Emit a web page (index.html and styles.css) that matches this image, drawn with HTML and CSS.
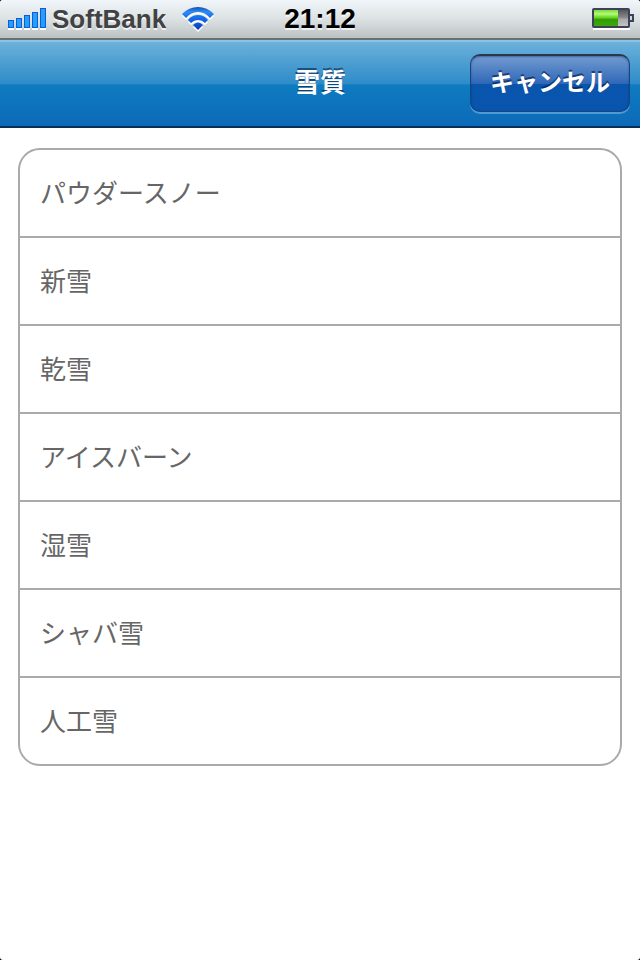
FILE: index.html
```html
<!DOCTYPE html>
<html lang="ja">
<head>
    <meta charset="UTF-8">
    <meta name="viewport" content="width=device-width, initial-scale=1.0">
    <title>雪質</title>
    <link rel="stylesheet" href="styles.css">
</head>

<body>

<div class="status-bar">
  <div class="carrier">
    <svg class="signal" width="40" height="22" viewBox="0 0 40 22">
      <defs>
        <linearGradient id="bar" x1="0" y1="0" x2="0" y2="1">
          <stop offset="0" stop-color="#2f9cf8"/>
          <stop offset="1" stop-color="#14a4ff"/>
        </linearGradient>
      </defs>
      <path d="M0 21h6M8 21h6M16 21h6M24 21h6M32 21h6" stroke="#fff" stroke-width="2"/>
      <g fill="url(#bar)" stroke="#0f5cd8">
        <rect x="0.5" y="12.5" width="5" height="7"/>
        <rect x="8.5" y="10.5" width="5" height="9"/>
        <rect x="16.5" y="7.5" width="5" height="12"/>
        <rect x="24.5" y="4.5" width="5" height="15"/>
        <rect x="32.5" y="0.5" width="5" height="19"/>
      </g>
    </svg>
    <span class="carrier-name">SoftBank</span>
    <svg class="wifi" width="32" height="24" viewBox="0 0 32 24">
      <defs>
        <linearGradient id="wave" x1="0" y1="0" x2="0" y2="24" gradientUnits="userSpaceOnUse">
          <stop offset="0" stop-color="#1450a8"/>
          <stop offset="0.2" stop-color="#2f8cf5"/>
          <stop offset="0.5" stop-color="#1268e8"/>
          <stop offset="1" stop-color="#0838b8"/>
        </linearGradient>
      </defs>
      <g fill="#fff" transform="translate(0 2)">
        <path d="M0 7Q7 0 16 0T32 7L28 11Q23 5 16 5T4 11Z"/>
        <path d="M6 13Q10 8 16 8T26 13L23 16Q20 13 16 13T9 16Z"/>
        <path d="M11 18Q16 13 21 18L16 23Z"/>
      </g>
      <g fill="url(#wave)">
        <path d="M0 7Q7 0 16 0T32 7L28 11Q23 5 16 5T4 11Z"/>
        <path d="M6 13Q10 8 16 8T26 13L23 16Q20 13 16 13T9 16Z"/>
        <path d="M11 18Q16 13 21 18L16 23Z"/>
      </g>
    </svg>
  </div>
  <div class="clock">21:12</div>
  <svg class="battery" width="43" height="22" viewBox="0 0 43 22">
    <defs>
      <linearGradient id="charge" x1="0" y1="0" x2="0" y2="1">
        <stop offset="0" stop-color="#78dc3c"/>
        <stop offset="0.25" stop-color="#b4fa78"/>
        <stop offset="0.5" stop-color="#5cd014"/>
        <stop offset="0.6" stop-color="#329c08"/>
        <stop offset="1" stop-color="#3ca80c"/>
      </linearGradient>
      <linearGradient id="empty" x1="0" y1="0" x2="0" y2="1">
        <stop offset="0" stop-color="#505050"/>
        <stop offset="0.5" stop-color="#8c8c8c"/>
        <stop offset="0.55" stop-color="#a8a8a8"/>
        <stop offset="1" stop-color="#c8c8c8"/>
      </linearGradient>
    </defs>
    <path d="M1 21h37" stroke="#fff" stroke-width="2"/>
    <rect x="1" y="1" width="36" height="18" rx="1" fill="url(#empty)" stroke="#3b4259" stroke-width="2"/>
    <rect x="2" y="2" width="24" height="16" fill="url(#charge)"/>
    <path d="M38 7h3v6h-3" fill="#d0d4d8" stroke="#3b4259" stroke-width="2"/>
  </svg>
</div>

<header class="nav-bar">
  <h1>雪質</h1>
  <button type="button" class="cancel">キャンセル</button>
</header>

<main>
  <ul class="snow-list">
    <li><a href="#powder">パウダースノー</a></li>
    <li><a href="#new">新雪</a></li>
    <li><a href="#dry">乾雪</a></li>
    <li><a href="#ice">アイスバーン</a></li>
    <li><a href="#wet">湿雪</a></li>
    <li><a href="#slush">シャバ雪</a></li>
    <li><a href="#artificial">人工雪</a></li>
  </ul>
</main>

</body>
</html>
```
FILE: styles.css
```css
* {
    box-sizing: border-box;
}

html {
    background: #000;
}

body {
    margin: 0;
    min-height: 100vh;
    background: #fff;
    border-radius: 3px;
    overflow: hidden;
    font-family: "Liberation Sans", "Noto Sans CJK JP", sans-serif;
}

.status-bar {
    display: grid;
    grid-template-columns: 1fr auto 1fr;
    align-items: center;
    height: 40px;
    padding: 0 5px;
    background: linear-gradient(#f0f6f9, #dce1e4 50%, #bcc1c4);
    border-bottom: 2px solid #6a6f72;
    font-size: 26px;
    font-weight: bold;
    line-height: 38px;
    text-shadow: 0 2px 0 rgba(255, 255, 255, 0.7);
}

.carrier {
    display: flex;
    align-items: center;
    gap: 4px;
    padding-left: 3px;
    color: #424242;
}

.wifi {
    margin-left: 12px;
    overflow: visible;
}

.clock {
    color: #000;
    font-size: 28px;
}

.battery {
    justify-self: end;
}

.nav-bar {
    display: grid;
    grid-template-columns: 1fr auto 1fr;
    align-items: center;
    height: 88px;
    padding: 0 10px 2px;
    background: linear-gradient(#6cb1da, #2d8bc8 50%, #0e7bc0 51%, #0d6ab8);
    border-top: 2px solid #8ac5e6;
    border-bottom: 2px solid #062f5a;
}

.nav-bar h1 {
    grid-column: 2;
    margin: 0;
    color: #fff;
    font-size: 26px;
    line-height: 40px;
    text-shadow: 0 -2px 0 rgba(0, 30, 70, 0.6);
}

.cancel {
    justify-self: end;
    height: 58px;
    padding: 0 19px 6px;
    color: #fff;
    font-family: inherit;
    font-size: 24px;
    font-weight: bold;
    text-shadow: 0 -2px 0 rgba(0, 20, 70, 0.6);
    background: linear-gradient(#739bd0, #2f68b8 50%, #0a55ac 51%, #0954ae);
    border: 1px solid #134684;
    border-top: 2px solid #263950;
    border-radius: 10px;
    box-shadow: 0 2px 0 rgba(120, 185, 230, 0.6), inset 0 1px 2px rgba(0, 20, 60, 0.4);
    cursor: pointer;
}

main {
    padding: 20px 18px;
}

.snow-list {
    margin: 0;
    padding: 0;
    list-style: none;
    border: 2px solid #aaa;
    border-radius: 22px;
    overflow: hidden;
}

.snow-list li + li {
    border-top: 2px solid #aaa;
}

.snow-list a {
    display: block;
    padding: 21px 20px 23px;
    color: #666;
    font-family: "Noto Sans CJK JP", sans-serif;
    font-size: 26px;
    font-weight: 400;
    line-height: 42px;
    text-decoration: none;
}
```
